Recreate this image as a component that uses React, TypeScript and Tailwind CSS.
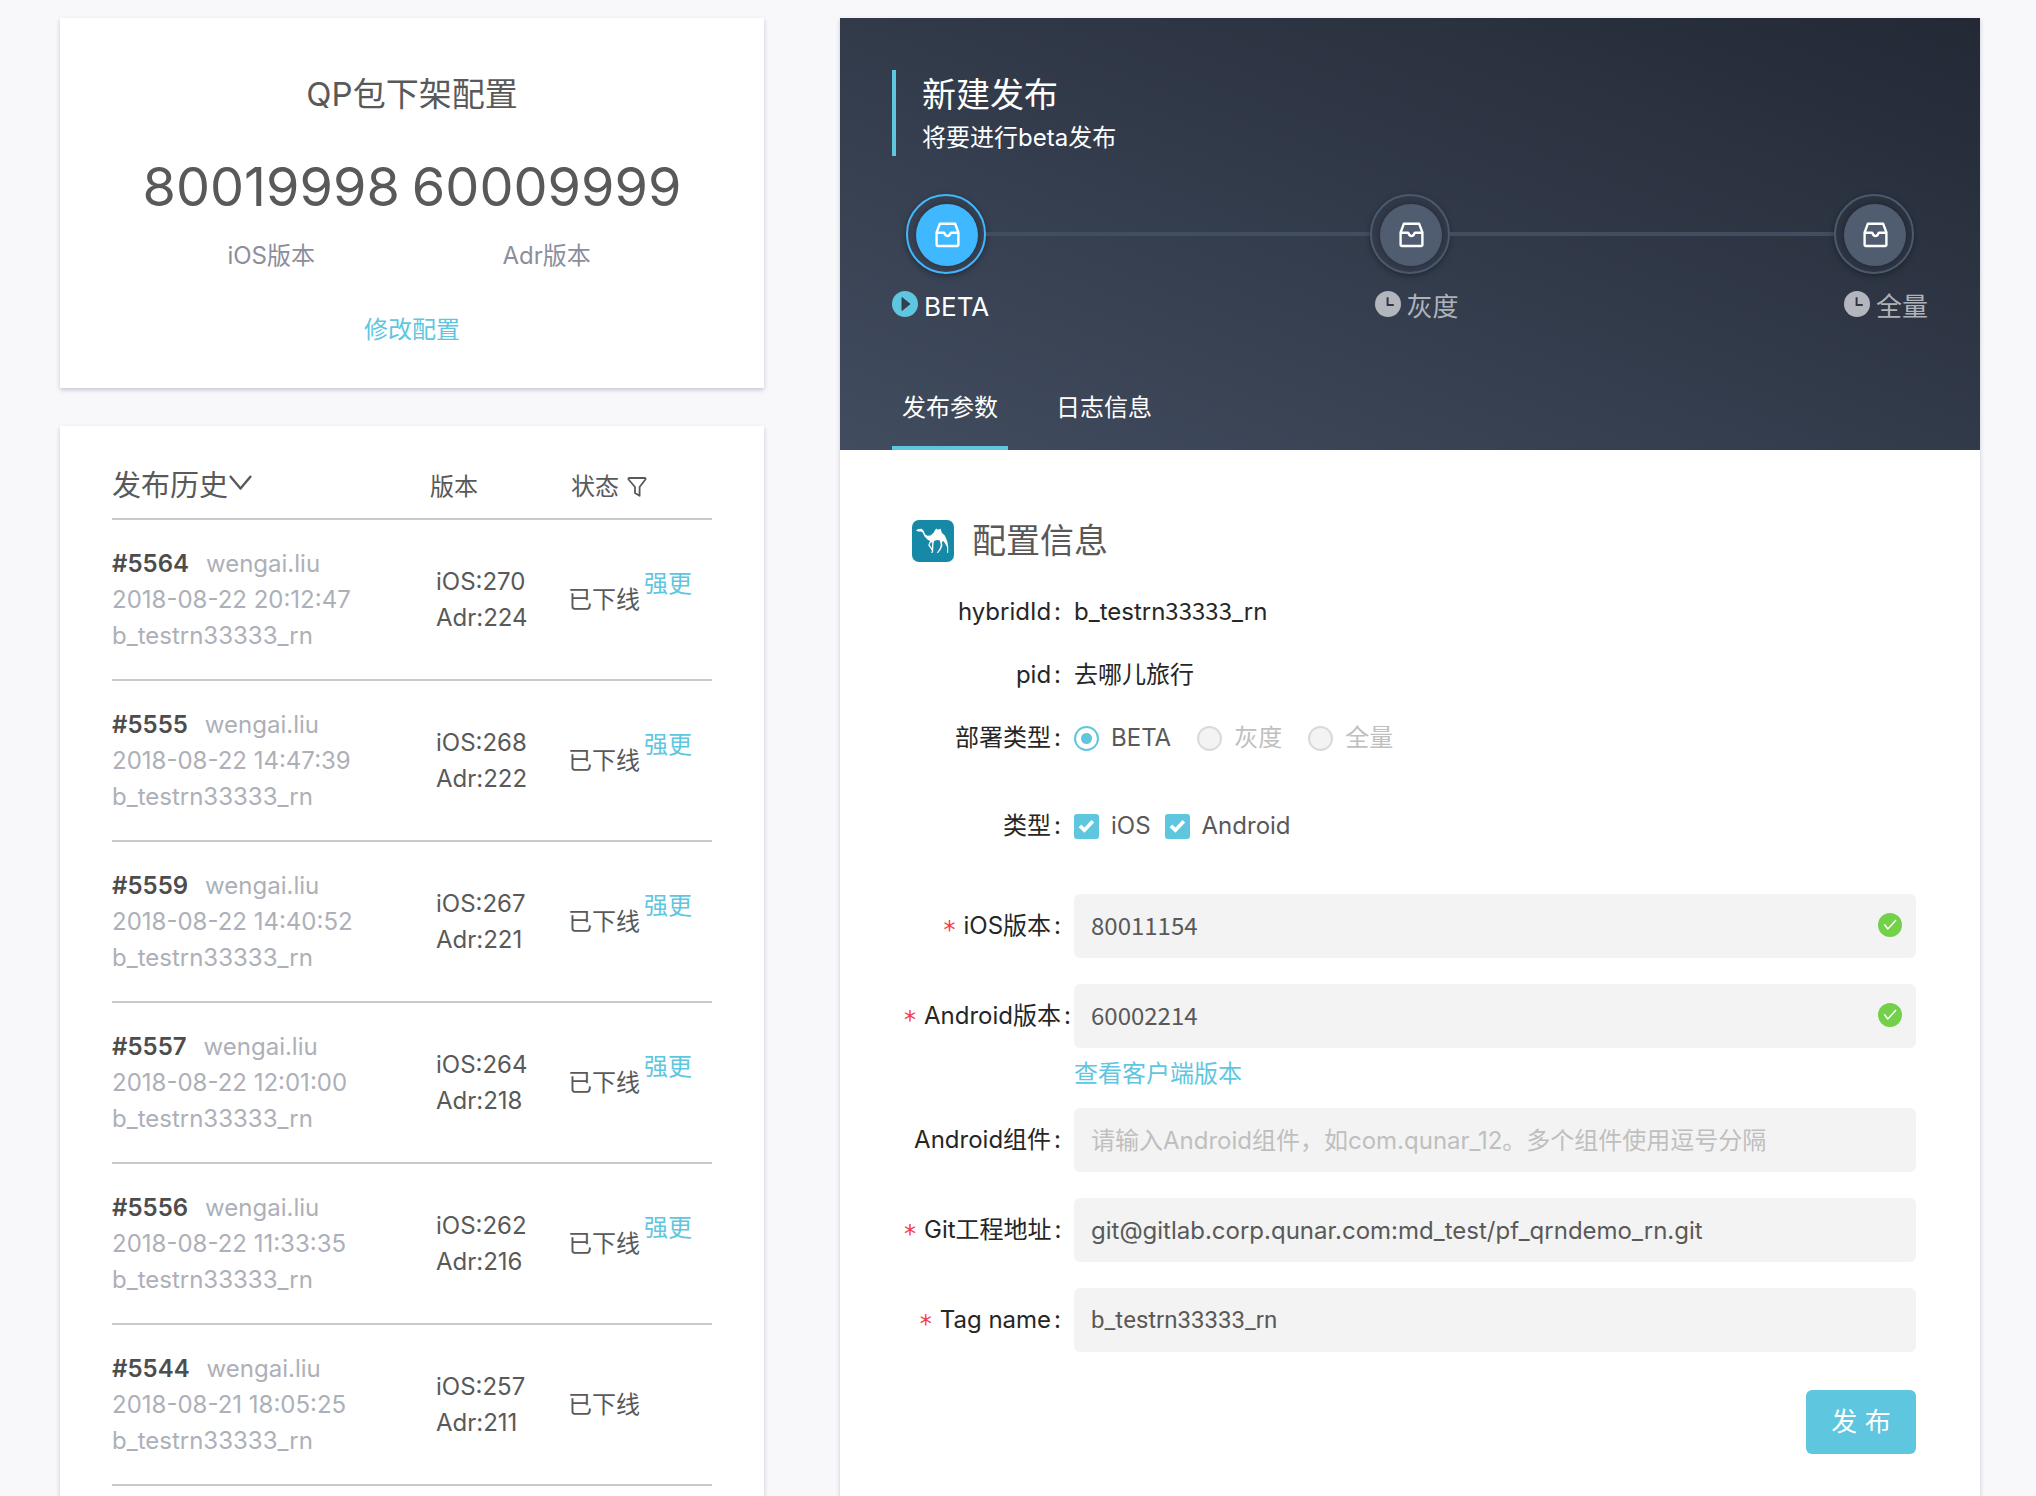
import type { ReactNode } from "react";

type Release = {
  id: number;
  time: string;
  ios: number;
  adr: number;
  forceUpdate: boolean;
};

type FieldProps = {
  id?: string;
  label: string;
  required?: boolean;
  tall?: boolean;
  children: ReactNode;
};

type StepProps = {
  active?: boolean;
};

const releases: Release[] = [
  { id: 5564, time: "2018-08-22 20:12:47", ios: 270, adr: 224, forceUpdate: true },
  { id: 5555, time: "2018-08-22 14:47:39", ios: 268, adr: 222, forceUpdate: true },
  { id: 5559, time: "2018-08-22 14:40:52", ios: 267, adr: 221, forceUpdate: true },
  { id: 5557, time: "2018-08-22 12:01:00", ios: 264, adr: 218, forceUpdate: true },
  { id: 5556, time: "2018-08-22 11:33:35", ios: 262, adr: 216, forceUpdate: true },
  { id: 5544, time: "2018-08-21 18:05:25", ios: 257, adr: 211, forceUpdate: false },
];

const cardShadow = "shadow-[0_2px_4px_rgba(60,70,110,0.28)]";
const inputClass =
  "block h-16 w-full rounded-md bg-[#f3f3f3] px-[17px] text-2xl text-[#595959] outline-none placeholder:text-[#bfbfbf]";
const versionInputClass = `${inputClass} pb-1 font-['Noto_Sans_CJK_SC',sans-serif]`;

function InboxIcon() {
  return (
    <svg
      className="size-[26px]"
      viewBox="0 0 26 26"
      fill="none"
      stroke="white"
      strokeWidth="2.4"
      strokeLinejoin="round"
    >
      <path d="M2.6 10.5 5.8 1.8h15.4l3.2 8.7v12.3a1.2 1.2 0 0 1-1.2 1.2H3.8a1.2 1.2 0 0 1-1.2-1.2Z" />
      <path d="M2.6 10.8h7.2c.4 0 .6.2.8.6.4 1.5 1.5 2.6 2.9 2.6s2.500-1.100 2.900-2.600c.2-.4.4-.6.8-.6h7.200" />
    </svg>
  );
}

function ClockIcon() {
  return (
    <svg className="mb-[6px] size-[26px]" viewBox="0 0 26 26" fill="none">
      <circle cx="13" cy="13" r="13" fill="#b4b6be" />
      <path d="M12.6 6.2v7.8h6.2" stroke="#2f3747" strokeWidth="2" />
    </svg>
  );
}

function PlayIcon() {
  return (
    <svg className="mb-[6px] size-[26px]" viewBox="0 0 26 26">
      <circle cx="13" cy="13" r="13" fill="#5fc6df" />
      <path d="M10 6.6v12.8L18 13Z" fill="#353f50" stroke="#353f50" strokeLinejoin="round" />
    </svg>
  );
}

function SuccessIcon() {
  return (
    <svg
      className="pointer-events-none absolute top-[19px] right-[14px] size-6"
      viewBox="0 0 24 24"
      fill="none"
    >
      <circle cx="12" cy="12" r="12" fill="#72d049" />
      <path
        d="m6.6 11.8 3.2 4.2 7.8-8.6"
        stroke="white"
        strokeWidth="1.5"
        strokeLinecap="round"
        strokeLinejoin="round"
      />
    </svg>
  );
}

function CamelIcon() {
  return (
    <svg className="size-[42px]" viewBox="0 0 42 42">
      <rect width="42" height="42" rx="7" fill="#1689a6" />
      <path
        fill="white"
        d="M4 10.2 6.4 9l3.2-.2 2 2 1.400 3.400 2.200 1.600 3.400-.4 3-2.600 1.800-3.400 1.200-.8.8.8h1.800l1-.8.8 1.400.8 2.800 3 2.600 1.400 3.200 1.400 4.200.6 3.600v6.600h-.9l-.3-6-2-3.800-2-2.400-1 1.400.4 3.400-1.600 3.800-2.800 3.600h-1.200l3-4.800 1-3.200-1-4.600-2.600-.4-3.200 1-.6 3.600-.2 7-1 1.400h-1.200l1-2-1.800-3-2-2.800 1.800-4.200-2.600-1.600-2.800-2.800-2-4-1.600-1.200-3 .2ZM17.600 24.600l2.200 3.600.4-5.600-1.200-.4Z"
      />
    </svg>
  );
}

function Step({ active }: StepProps) {
  return (
    <div
      className={`size-20 shrink-0 rounded-full border-2 p-2 shadow-[0_2px_6px_rgba(0,0,0,0.35)] ${
        active ? "border-[#3fb8ff]" : "border-[#4c586c]"
      }`}
    >
      <div
        className={`flex size-[62px] items-center justify-center rounded-full shadow-[0_0_6px_rgba(0,0,0,0.3)] ${
          active ? "bg-[#3fb8ff]" : "bg-[#505c70]"
        }`}
      >
        <InboxIcon />
      </div>
    </div>
  );
}

function Field({ id, label, required, tall, children }: FieldProps) {
  const content = (
    <>
      {required && (
        <span className="mr-2 align-[-4px] font-['DejaVu_Sans',sans-serif] leading-none text-[#f5394c]">*</span>
      )}
      <span>{label}</span>
      <span className="mr-[13px] ml-[3px]">:</span>
    </>
  );
  const labelClass = `block w-[170px] shrink-0 text-right whitespace-nowrap text-[#262626] ${
    tall ? "leading-16" : "leading-9"
  }`;

  return (
    <div className="flex items-start">
      {id ? (
        <label htmlFor={id} className={labelClass}>
          {content}
        </label>
      ) : (
        <div className={labelClass}>{content}</div>
      )}
      <div className="min-w-0 flex-1">{children}</div>
    </div>
  );
}

function DeployRadio({ label, checked }: { label: string; checked?: boolean }) {
  return (
    <label className="flex items-center gap-3">
      <input
        type="radio"
        name="deploy"
        defaultChecked={checked}
        disabled={!checked}
        className="size-[25px] appearance-none rounded-full border-2 border-[#5fc6df] bg-white checked:bg-[radial-gradient(circle,#5fc6df_5px,transparent_6px)] disabled:border-[#d9d9d9] disabled:bg-[#f3f3f3]"
      />
      <span className={checked ? "text-[#595959]" : "text-[#bfbfbf]"}>{label}</span>
    </label>
  );
}

function PlatformCheckbox({ label }: { label: string }) {
  return (
    <label className="flex items-center gap-3">
      <span className="relative block size-[25px]">
        <input
          type="checkbox"
          defaultChecked
          className="peer block size-[25px] appearance-none rounded-[3px] border-2 border-[#d9d9d9] checked:border-[#5fc6df] checked:bg-[#5fc6df]"
        />
        <svg
          className="pointer-events-none absolute inset-0 hidden peer-checked:block"
          viewBox="0 0 26 26"
          fill="none"
        >
          <path d="m6.2 12.4 4.6 4.4 8.8-9.2" stroke="white" strokeWidth="3.8" />
        </svg>
      </span>
      <span className="text-[#595959]">{label}</span>
    </label>
  );
}

function QpCard() {
  return (
    <section className={`flex flex-col items-center bg-white pt-[52px] pb-10 ${cardShadow}`}>
      <h2 className="text-[33px] leading-[48px] text-[#595959]">QP包下架配置</h2>
      <div className="mt-[25px] flex gap-3 text-center">
        <div>
          <p className="text-[54px] leading-[88px] text-[#595959]">80019998</p>
          <p className="leading-[50px] text-[#8c8e9c]">iOS版本</p>
        </div>
        <div>
          <p className="text-[54px] leading-[88px] text-[#595959]">60009999</p>
          <p className="leading-[50px] text-[#8c8e9c]">Adr版本</p>
        </div>
      </div>
      <a href="#edit" className="mt-[31px] leading-9 text-[#5fc6df]">
        修改配置
      </a>
    </section>
  );
}

function HistoryCard() {
  return (
    <section className={`flex-1 bg-white px-[52px] pt-[29px] ${cardShadow}`}>
      <table className="w-full table-fixed text-left text-[#595959]">
        <thead>
          <tr className="border-b-2 border-[#c9c9c9]">
            <th className="h-16 w-[53%] font-normal">
              <button className="flex items-center text-[29px]">
                发布历史
                <svg className="mb-2 h-4 w-6" viewBox="0 0 24 16" fill="none">
                  <path d="M2 1 12.5 13.5 23 1" stroke="#595959" strokeWidth="2.4" strokeLinejoin="round" />
                </svg>
              </button>
            </th>
            <th className="w-[23%] font-normal">版本</th>
            <th className="pl-[3px] font-normal">
              <span className="flex items-center gap-2">
                状态
                <button aria-label="filter">
                  <svg className="block size-5" viewBox="0 0 20 20" fill="none">
                    <path
                      d="M2.400 1h15.200c.9 0 1.300.8.8 1.500L12.600 10v8.800L8 16v-6L1.600 2.500C1 1.800 1.500 1 2.400 1Z"
                      stroke="#595959"
                      strokeWidth="1.8"
                      strokeLinejoin="round"
                    />
                  </svg>
                </button>
              </span>
            </th>
          </tr>
        </thead>
        <tbody>
          {releases.map((release) => (
            <tr key={release.id} className="border-b-2 border-[#c9c9c9] leading-9">
              <td className="pt-[26px] pb-[25px] text-[#adb0b8]">
                <p>
                  <b className="mr-[17px] font-semibold text-[#4d4d4d]">#{release.id}</b>
                  wengai.liu
                </p>
                <p>{release.time}</p>
                <p>b_testrn33333_rn</p>
              </td>
              <td className="pl-[6px]">
                <p>iOS:{release.ios}</p>
                <p>Adr:{release.adr}</p>
              </td>
              <td>
                <div className="flex items-center gap-1 whitespace-nowrap">
                  <span>已下线</span>
                  {release.forceUpdate && (
                    <a href="#force" className="mb-8 text-[#5fc6df]">
                      强更
                    </a>
                  )}
                </div>
              </td>
            </tr>
          ))}
        </tbody>
      </table>
    </section>
  );
}

function PublishHeader() {
  return (
    <header className="bg-[linear-gradient(to_top_right,#414c5f,#232935)] px-[52px] pt-[52px] text-white">
      <div className="border-l-4 border-[#5fc6df] pl-[26px]">
        <h1 className="text-[34px] leading-[50px]">新建发布</h1>
        <p className="leading-9">将要进行beta发布</p>
      </div>
      <div className="mt-[38px] flex items-center px-[14px]">
        <Step active />
        <div className="h-1 flex-1 bg-[#424d5f]" />
        <Step />
        <div className="h-1 flex-1 bg-[#424d5f]" />
        <Step />
      </div>
      <div className="mt-[13px] flex justify-between text-[26px] leading-10 text-[#b0b2ba]">
        <span className="flex items-center gap-[6px] text-white">
          <PlayIcon />
          BETA
        </span>
        <span className="flex items-center gap-[6px]">
          <ClockIcon />
          灰度
        </span>
        <span className="flex items-center gap-[6px]">
          <ClockIcon />
          全量
        </span>
      </div>
      <nav className="mt-[41px] flex gap-[38px]">
        <button className="border-b-4 border-[#5fc6df] px-[10px] pt-[22px] pb-5 leading-9">发布参数</button>
        <button className="border-b-4 border-transparent px-[10px] pt-[22px] pb-5 leading-9">日志信息</button>
      </nav>
    </header>
  );
}

function PublishForm() {
  return (
    <form className="px-16 pt-[67px] pb-[42px]">
      <h2 className="flex items-center gap-[18px] pl-2 text-[34px] leading-[48px] text-[#595959]">
        <CamelIcon />
        配置信息
      </h2>
      <div className="mt-[29px] flex flex-col gap-[27px]">
        <Field label="hybridId">
          <p className="leading-9 text-[#262626]">
            b_testrn<span className="font-['Noto_Sans_CJK_SC',sans-serif] leading-none">33333</span>_rn
          </p>
        </Field>
        <Field label="pid">
          <p className="leading-9 text-[#262626]">去哪儿旅行</p>
        </Field>
        <Field label="部署类型">
          <div className="flex h-9 items-center gap-[26px]">
            <DeployRadio label="BETA" checked />
            <DeployRadio label="灰度" />
            <DeployRadio label="全量" />
          </div>
        </Field>
      </div>
      <div className="mt-[52px] mb-[50px]">
        <Field label="类型">
          <div className="flex h-9 items-center gap-[14px]">
            <PlatformCheckbox label="iOS" />
            <PlatformCheckbox label="Android" />
          </div>
        </Field>
      </div>
      <div className="flex flex-col gap-[26px]">
        <Field id="ios" label="iOS版本" required tall>
          <div className="relative">
            <input id="ios" defaultValue="80011154" className={versionInputClass} />
            <SuccessIcon />
          </div>
        </Field>
        <Field id="android" label="Android版本" required tall>
          <div className="relative">
            <input id="android" defaultValue="60002214" className={versionInputClass} />
            <SuccessIcon />
          </div>
          <a href="#versions" className="mt-2 -mb-[10px] block leading-9 text-[#5fc6df]">
            查看客户端版本
          </a>
        </Field>
        <Field id="component" label="Android组件" tall>
          <input
            id="component"
            placeholder="请输入Android组件，如com.qunar_12。多个组件使用逗号分隔"
            className={inputClass}
          />
        </Field>
        <Field id="git" label="Git工程地址" required tall>
          <input
            id="git"
            defaultValue="git@gitlab.corp.qunar.com:md_test/pf_qrndemo_rn.git"
            className={inputClass}
          />
        </Field>
        <Field id="tag" label="Tag name" required tall>
          <input
            id="tag"
            defaultValue="b_testrn33333_rn"
            className={`${inputClass} font-['Roboto',sans-serif]`}
          />
        </Field>
      </div>
      <div className="mt-[38px] flex justify-end">
        <button type="button" className="h-16 w-[110px] rounded-md bg-[#5fc6df] pt-px text-[26px] text-white">
          发 布
        </button>
      </div>
    </form>
  );
}

export default function App() {
  return (
    <main className="grid min-h-screen grid-cols-[704fr_1140fr] gap-[76px] bg-[#f8f8fb] pt-[18px] pr-14 pl-[60px] font-['Inter','Noto_Sans_CJK_SC',sans-serif] text-2xl">
      <div className="flex min-w-0 flex-col gap-[38px]">
        <QpCard />
        <HistoryCard />
      </div>
      <div className={`min-w-0 bg-white ${cardShadow}`}>
        <PublishHeader />
        <PublishForm />
      </div>
    </main>
  );
}
